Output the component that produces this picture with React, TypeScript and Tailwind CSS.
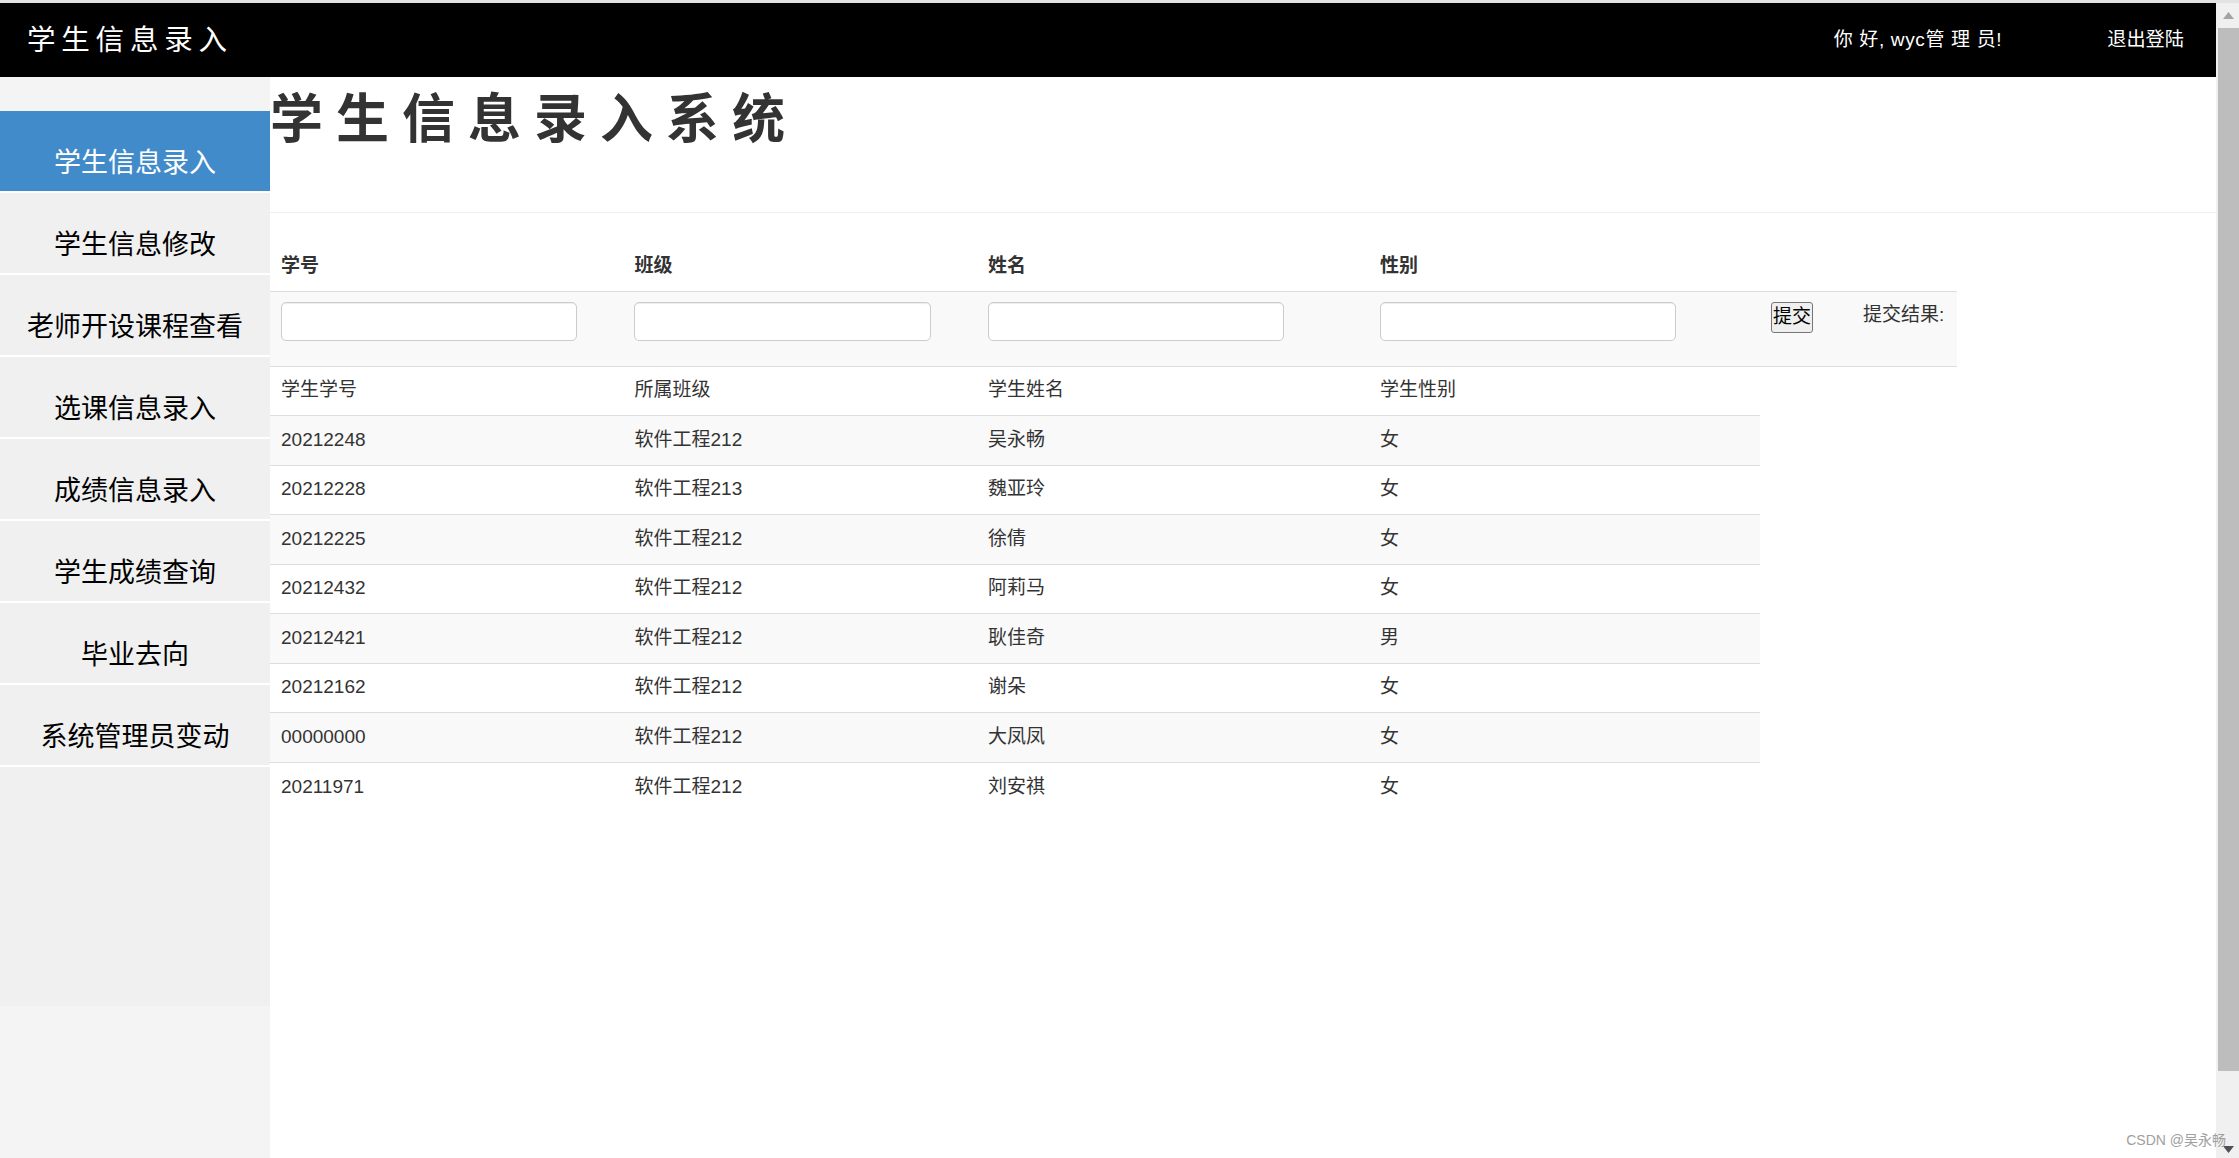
const menu = ['学生信息录入', '学生信息修改', '老师开设课程查看', '选课信息录入', '成绩信息录入', '学生成绩查询', '毕业去向', '系统管理员变动']

const students = [
  ['20212248', '软件工程212', '吴永畅', '女'],
  ['20212228', '软件工程213', '魏亚玲', '女'],
  ['20212225', '软件工程212', '徐倩', '女'],
  ['20212432', '软件工程212', '阿莉马', '女'],
  ['20212421', '软件工程212', '耿佳奇', '男'],
  ['20212162', '软件工程212', '谢朵', '女'],
  ['00000000', '软件工程212', '大凤凤', '女'],
  ['20211971', '软件工程212', '刘安祺', '女'],
]

function TextInput({ width }: { width: string }) {
  return <input type="text" className={`${width} block h-[39px] rounded-[5px] border border-[#ccc] bg-white shadow-[inset_0_1px_1px_rgba(0,0,0,0.075)]`} />
}

export default function App() {
  return (
    <div className="relative flex h-[1158px] w-[2239px] flex-col overflow-hidden bg-white font-['Liberation_Sans','Noto_Sans_CJK_SC',sans-serif] text-[19px] leading-[26.67px] text-[#333]">
      <div className="h-[3px] shrink-0 bg-[#e3e3e3]" />
      <div className="flex min-h-0 flex-1">
        <div className="flex min-w-0 flex-1 flex-col">
          {/* Top bar */}
          <header className="flex h-[74px] shrink-0 items-center bg-black text-white">
            <span className="ml-[27px] text-[28.5px] tracking-[5.8px]">学生信息录入</span>
            <span className="ml-auto text-[19px] tracking-[0.65px]">你 好, wyc管 理 员!</span>
            <span className="ml-[105px] mr-[32px] text-[19.2px]">退出登陆</span>
          </header>

          <div className="flex min-h-0 flex-1">
            {/* Side menu */}
            <aside className="w-[270px] shrink-0 bg-[#f4f4f4] pt-[34px]">
              <ul className="h-[895px] bg-[#f0f0f0]">
                {menu.map((item, i) => (
                  <li
                    key={item}
                    className={`h-[82px] border-b-2 border-white pt-[33px] text-center text-[27px] leading-[38px] ${
                      i === 0 ? 'bg-[#428bca] text-white' : 'text-black'
                    }`}
                  >
                    {item}
                  </li>
                ))}
              </ul>
            </aside>

            <main className="min-w-0 flex-1">
              <div className="h-[136px] border-b border-[#eee]">
                <h1 className="pt-[15px] text-[53px] font-bold leading-[56px] tracking-[13px]">学生信息录入系统</h1>
              </div>

              <table className="mt-[29px] w-[1687px] table-fixed border-collapse">
                <colgroup>
                  <col className="w-[354px]" />
                  <col className="w-[353px]" />
                  <col className="w-[392px]" />
                  <col className="w-[391px]" />
                  <col className="w-[92px]" />
                  <col className="w-[105px]" />
                </colgroup>
                <thead>
                  <tr className="h-[49px] border-b border-[#ddd] text-left">
                    <th className="px-[11px]">学号</th>
                    <th className="pl-[10.5px] pr-[11px]">班级</th>
                    <th className="px-[11px]">姓名</th>
                    <th className="px-[11px]">性别</th>
                    <th />
                    <th />
                  </tr>
                </thead>
                <tbody>
                  <tr className="h-[75px] bg-[#f9f9f9] align-top">
                    <td className="px-[11px] pt-[10px]"><TextInput width="w-[296px]" /></td>
                    <td className="pl-[10px] pr-[11px] pt-[10px]"><TextInput width="w-[297px]" /></td>
                    <td className="px-[11px] pt-[10px]"><TextInput width="w-[296px]" /></td>
                    <td className="px-[11px] pt-[10px]"><TextInput width="w-[296px]" /></td>
                    <td className="px-[11px] pt-[10px]">
                      <button type="button" className="block h-[31px] w-[42px] rounded-[3px] border border-[#767676] bg-[#efefef] text-center text-[19px] leading-[26px] text-black">提交</button>
                    </td>
                    <td className="pt-[10px] pl-[11px] whitespace-nowrap">提交结果:</td>
                  </tr>
                  <tr className="h-[49.5px] border-t border-[#ddd]">
                    <td className="px-[11px]">学生学号</td>
                    <td className="pl-[10.5px] pr-[11px]">所属班级</td>
                    <td className="px-[11px]">学生姓名</td>
                    <td className="px-[11px]">学生性别</td>
                  </tr>
                  {students.map((row, i) => (
                    <tr key={row[0]} className="h-[49.5px]">
                      {row.map((cell, j) => (
                        <td key={j} className={`border-t border-[#ddd] ${j === 1 ? 'pl-[10.5px] pr-[11px]' : 'px-[11px]'} ${i % 2 === 0 ? 'bg-[#f9f9f9]' : 'bg-white'}`}>
                          {cell}
                        </td>
                      ))}
                    </tr>
                  ))}
                </tbody>
              </table>
            </main>
          </div>
        </div>

        {/* Scrollbar */}
        <div className="flex w-[23px] shrink-0 flex-col bg-[#f0f0f0]">
          <div className="flex h-[25px] shrink-0 items-center justify-center pl-[2px]">
            <svg width="11" height="7" viewBox="0 0 11 7"><path d="M5.5 0 11 7H0z" fill="#a3a3a3" /></svg>
          </div>
          <div className="ml-[2px] h-[1043px] shrink-0 bg-[#bdbdbd]" />
          <div className="mt-auto flex h-[25px] shrink-0 items-end justify-center pb-[5px] pl-[2px]">
            <svg width="11" height="7" viewBox="0 0 11 7"><path d="M0 0H11L5.5 7z" fill="#505050" /></svg>
          </div>
        </div>
      </div>

      <span className="absolute right-[13px] bottom-[8px] text-[14px] leading-[20px] text-[#a0a0a0]">CSDN @吴永畅</span>
    </div>
  )
}
